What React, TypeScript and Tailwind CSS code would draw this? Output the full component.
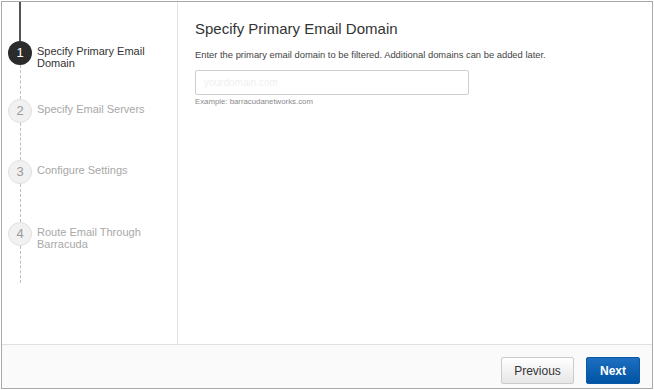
import React from "react";

const steps = [
  { n: 1, label: ["Specify Primary Email", "Domain"], gap: 34 },
  { n: 2, label: ["Specify Email Servers"], gap: 37 },
  { n: 3, label: ["Configure Settings"], gap: 38 },
  { n: 4, label: ["Route Email Through", "Barracuda"], gap: 37 },
];

export default function App() {
  return (
    <div className="w-[654px] h-[390px] bg-white p-[1px] font-['Liberation_Sans',Arial,sans-serif]">
      <div className="w-[652px] h-[388px] border border-[#a9a9a9] flex flex-col">
        <div className="flex flex-1 min-h-0">
          <div className="w-[176px] border-r border-[#e3e3e3] pl-[6px] flex flex-col">
            <div className="ml-[11px] w-[2px] h-[39px] bg-[#555]" />
            {steps.map((s) => {
              const active = s.n === 1;
              return (
                <div key={s.n} className="flex">
                  <div className="w-[24px] flex flex-col items-center">
                    <div
                      className={
                        active
                          ? "w-[24px] h-[24px] rounded-full bg-[#2b2b2b] text-white text-[13px] flex items-center justify-center"
                          : "w-[24px] h-[24px] rounded-full bg-[#f1f1f1] border border-[#e0e0e0] text-[#9a9a9a] text-[13px] flex items-center justify-center"
                      }
                    >
                      {s.n}
                    </div>
                    <div
                      className="border-l border-dashed border-[#bdbdbd] w-0"
                      style={{ height: s.gap }}
                    />
                  </div>
                  <div
                    className={
                      active
                        ? "pl-[5px] pt-[4px] text-[11px] leading-[12px] text-[#333]"
                        : "pl-[5px] pt-[4px] text-[11px] leading-[12px] text-[#a8a8a8]"
                    }
                  >
                    {s.label.map((l) => (
                      <div key={l}>{l}</div>
                    ))}
                  </div>
                </div>
              );
            })}
          </div>
          <div className="flex-1 pl-[17px] pt-[18px]">
            <div className="text-[15px] leading-[18px] text-[#333]">
              Specify Primary Email Domain
            </div>
            <div className="mt-[11px] text-[9.4px] leading-[12px] text-[#444]">
              Enter the primary email domain to be filtered. Additional domains can be added later.
            </div>
            <div className="mt-[9px] w-[274px] h-[25px] border border-[#cfcfcf] rounded-[2px] flex items-center px-[8px] text-[10px] text-[#f0f0f0]">
              yourdomain.com
            </div>
            <div className="mt-[2px] text-[7.8px] leading-[10px] text-[#8a8a8a]">
              Example: barracudanetworks.com
            </div>
          </div>
        </div>
        <div className="h-[44px] border-t border-[#e0e0e0] bg-[#fafafa] flex justify-end items-start pt-[12px] pr-[12px] gap-[12px]">
          <button className="w-[73px] h-[27px] rounded-[2px] border border-[#cccccc] bg-gradient-to-b from-[#ffffff] to-[#e6e6e6] text-[12px] text-[#333]">
            Previous
          </button>
          <button className="w-[54px] h-[27px] rounded-[2px] border border-[#0a57a3] bg-gradient-to-b from-[#1c6fc2] to-[#0153a3] text-[12px] font-bold text-white">
            Next
          </button>
        </div>
      </div>
    </div>
  );
}
